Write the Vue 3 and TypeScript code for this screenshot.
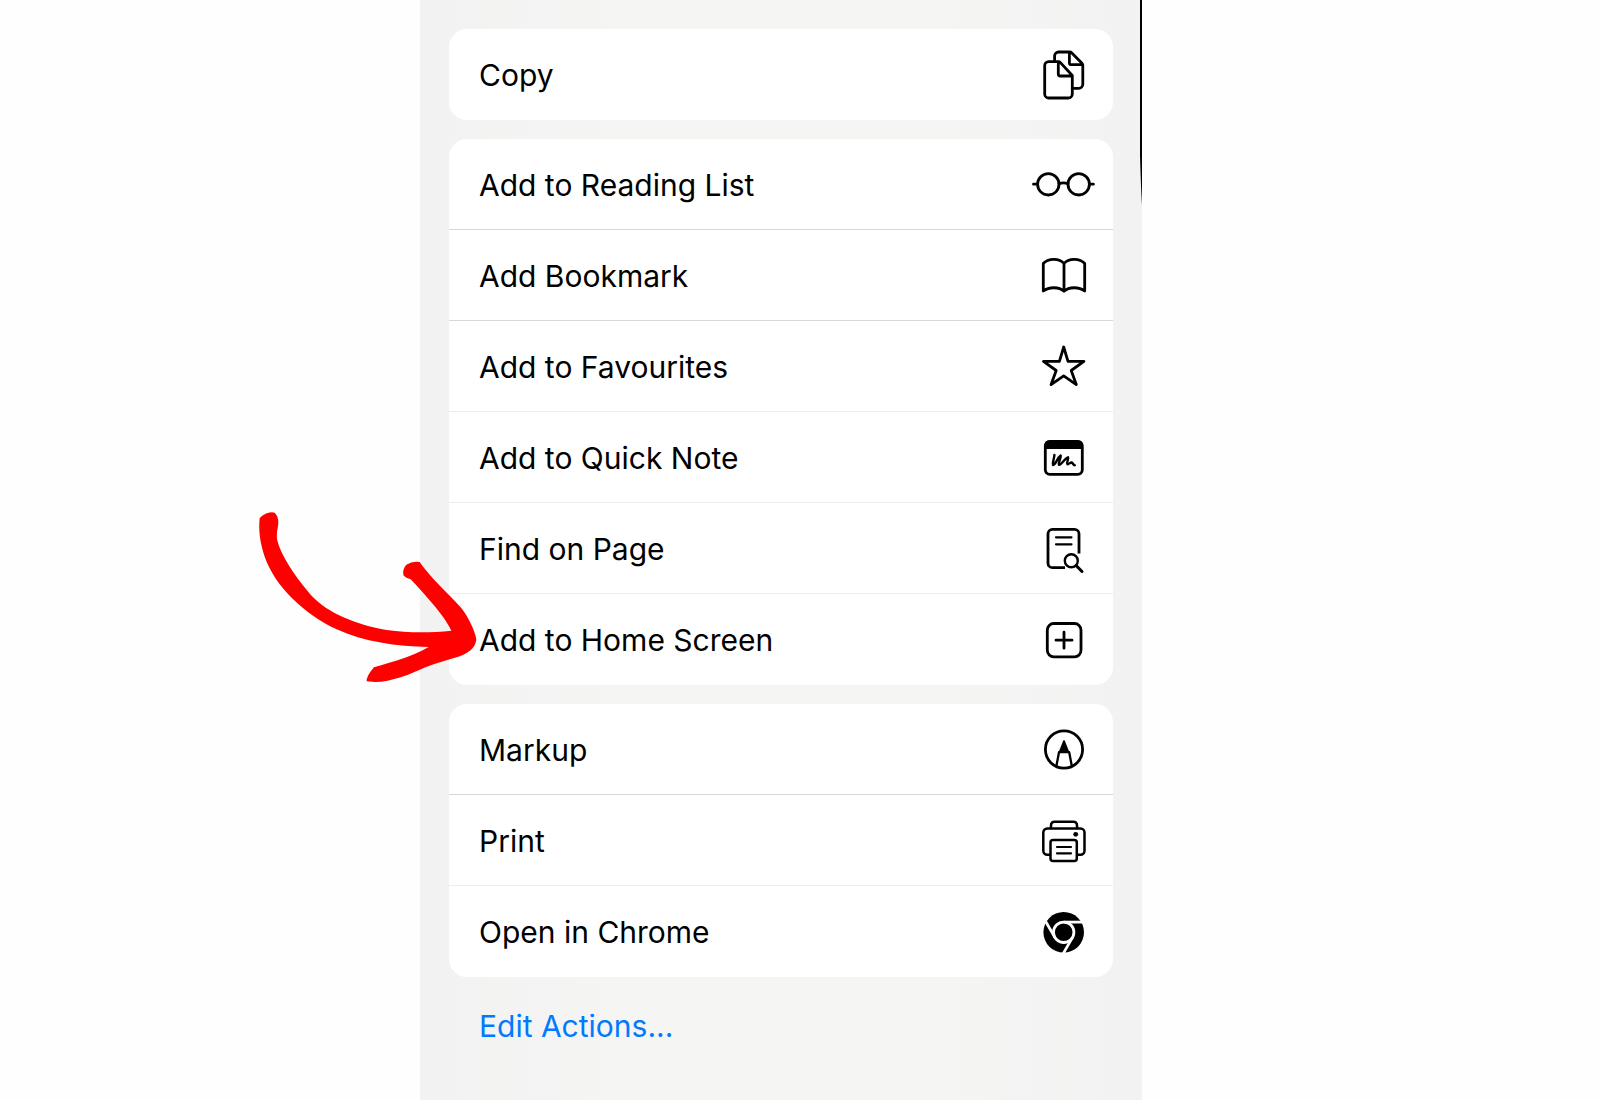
<script setup lang="ts">
type IconName =
  | 'copy'
  | 'glasses'
  | 'book'
  | 'star'
  | 'note'
  | 'find'
  | 'plus'
  | 'markup'
  | 'print'
  | 'chrome'

interface Action {
  label: string
  icon: IconName
  softLine?: boolean
  highlighted?: boolean
}

const groups: Action[][] = [
  [{ label: 'Copy', icon: 'copy' }],
  [
    { label: 'Add to Reading List', icon: 'glasses' },
    { label: 'Add Bookmark', icon: 'book' },
    { label: 'Add to Favourites', icon: 'star', softLine: true },
    { label: 'Add to Quick Note', icon: 'note', softLine: true },
    { label: 'Find on Page', icon: 'find', softLine: true },
    { label: 'Add to Home Screen', icon: 'plus', highlighted: true },
  ],
  [
    { label: 'Markup', icon: 'markup' },
    { label: 'Print', icon: 'print', softLine: true },
    { label: 'Open in Chrome', icon: 'chrome' },
  ],
]
</script>

<template>
  <div class="page">
    <main class="sheet">
      <ul v-for="(group, index) in groups" :key="index" class="card">
        <li
          v-for="action in group"
          :key="action.label"
          class="item"
          :class="{ soft: action.softLine }"
        >
          <button type="button" class="action">
            <span class="label">{{ action.label }}</span>
            <svg class="icon" viewBox="0 0 64 90" aria-hidden="true">
              <g v-if="action.icon === 'copy'">
                <path d="M27 32.6H16.7a4 4 0 0 0-4 4V65a4 4 0 0 0 4 4h19.6a4 4 0 0 0 4-4V46.5L28.2 33.4Q27.5 32.6 26.3 32.6V45a2 2 0 0 0 2 2h12" />
                <path d="M22.6 31.5V27a4 4 0 0 1 4-4H37.4Q38.8 23 39.6 23.8L50.2 34.6Q50.8 35.3 50.8 36.4V55.3a4 4 0 0 1-4 4H42M37.4 23.4V33.7a2 2 0 0 0 2 2H50.6" />
              </g>
              <g v-else-if="action.icon === 'glasses'">
                <circle cx="16.3" cy="45.3" r="10.7" />
                <circle cx="46.7" cy="45.3" r="10.7" />
                <path d="M27 44.6q4.500-1.600 9 0M1.500 45.200h4M57.700 45.200h3.700" />
              </g>
              <g v-else-if="action.icon === 'book'">
                <path d="M11.300 61V33.500C16 28 27.500 27.800 32 33.500C36.500 27.800 48 28 52.700 33.500V61C47 56.600 37 56.600 32 61.300C27 56.600 17 56.600 11.300 61ZM32 33.500V61" />
              </g>
              <g v-else-if="action.icon === 'star'">
                <path d="M31.700 26L36 40.300H51.900L39.200 49.500L44.300 63.600L31.700 54.900L19.100 63.600L24.200 49.500L11.500 40.300H27.400Z" />
              </g>
              <g v-else-if="action.icon === 'note'">
                <rect x="13.300" y="29.300" width="37" height="33" rx="4.500" />
                <path class="solid" d="M12.500 37V33a4.500 4.500 0 0 1 4.500-4.500H46.500A4.500 4.500 0 0 1 51 33V37Z" />
                <path d="M22.400 43C22.400 46 20.200 50.500 21 53C24 52.500 25 46 28.700 43.600C29.500 46 25.800 50.800 27 52.800C30 52.600 32 47 36 45.300C37 47.500 34 50.500 35.400 52.200C37 52.500 38 50.300 39.600 50.500C41 50.800 41 53 42.800 53.200" stroke-width="2.400" />
              </g>
              <g v-else-if="action.icon === 'find'">
                <path d="M33 64.700H20.500a4.500 4.500 0 0 1-4.500-4.500V30.800a4.500 4.500 0 0 1 4.500-4.500H42.500a4.500 4.500 0 0 1 4.500 4.500V50.500" stroke-linecap="butt" />
                <path d="M24 34.300H39.500M24 41.300H39.500" stroke-width="2.200" />
                <circle cx="39.300" cy="57.700" r="6.500" stroke-width="2.400" />
                <path d="M44.200 62.600L50 68.500" stroke-width="3" />
              </g>
              <g v-else-if="action.icon === 'plus'">
                <rect x="15.300" y="29.500" width="33.700" height="33.300" rx="6.500" />
                <path d="M24 46.200H40M32 38.200V54.200" />
              </g>
              <g v-else-if="action.icon === 'markup'">
                <circle cx="32" cy="45.500" r="18.600" />
                <path class="solid" d="M31 37.200Q32 35 33 37.200L37.500 48.500H26.500Z" />
                <path d="M24.500 61.500L27 48.200H37.200L39.700 61.500" stroke-width="2.300" />
              </g>
              <g v-else-if="action.icon === 'print'">
                <path d="M19 33V30.200a3.500 3.500 0 0 1 3.500-3.500h19a3.500 3.500 0 0 1 3.500 3.500V33" stroke-width="2.500" />
                <path d="M18 59.700H15.300a4 4 0 0 1-4-4V37.500a4 4 0 0 1 4-4H48.500a4 4 0 0 1 4 4V55.700a4 4 0 0 1-4 4H46" stroke-width="2.500" />
                <rect x="18.500" y="44.900" width="26.300" height="21" rx="2.500" stroke-width="2.500" />
                <path d="M25 52H39M25 58.300H39" stroke-width="2.200" />
                <circle class="solid" cx="43.700" cy="39.300" r="2.400" />
              </g>
              <g v-else>
                <circle class="solid" cx="31.700" cy="46.300" r="20.300" />
                <g class="cut">
                  <circle cx="31.700" cy="46.300" r="10.200" />
                  <path d="M31.700 36.100H53" />
                  <path d="M31.700 36.100H53" transform="rotate(120 31.700 46.300)" />
                  <path d="M31.700 36.100H53" transform="rotate(240 31.700 46.300)" />
                </g>
              </g>
            </svg>
          </button>
          <svg v-if="action.highlighted" class="arrow" viewBox="0 0 780 630" aria-hidden="true">
            <path d="M59 85Q64 77 80 70Q96 64 104 68Q115 78 115 98Q114 112 111 125Q110 136 111 148C122 196 162 255 212 314C265 372 350 403 440 420C510 430 575 428 634 422C615 380 565 325 512 268Q500 265 491 257Q486 238 499 224Q518 212 539 216C570 262 625 310 662 352C685 380 706 425 709 449C706 475 682 491 655 500C625 509 590 518 560 530C510 553 455 575 405 576L380 574Q378 560 402 532C460 515 515 500 566 471C470 470 370 455 290 418C195 373 105 290 74 200C60 160 55 120 59 85Z" />
          </svg>
        </li>
      </ul>
      <a class="edit" href="#">Edit Actions...</a>
      <svg class="edge" viewBox="0 0 3 205" aria-hidden="true">
        <path d="M0 0H2V205Q1 190 0 155Z" />
      </svg>
    </main>
  </div>
</template>

<style>
body {
  margin: 0;
  background: #fefefe;
}
</style>

<style scoped>
.page {
  display: grid;
  grid-template-columns: 420fr 722fr 458fr;
  min-height: 100vh;
  font-family: Inter, "Liberation Sans", sans-serif;
  font-size: 30px;
  line-height: 40px;
  color: #000;
}

.sheet {
  grid-column: 2;
  position: relative;
  box-sizing: border-box;
  display: flex;
  flex-direction: column;
  gap: 19px;
  padding: 29px;
  background: linear-gradient(90deg, #f2f2f2, #f5f5f4 30%, #f5f5f4 70%, #f2f2f2);
}

.card {
  margin: 0;
  padding: 0;
  list-style: none;
  background: #fff;
  border-radius: 18px;
}

.item {
  position: relative;
  box-sizing: border-box;
  height: 91px;
  border-bottom: 1px solid #d8d8d8;
}

.item.soft {
  border-bottom-color: #ededed;
}

.item:last-child {
  border-bottom: 0;
}

.action {
  display: flex;
  align-items: center;
  justify-content: space-between;
  width: 100%;
  height: 90px;
  padding: 0 17px 0 30px;
  border: 0;
  background: none;
  color: inherit;
  font: inherit;
  text-align: left;
  cursor: pointer;
}

.label {
  padding-top: 2px;
}

.icon {
  flex: none;
  width: 64px;
  height: 90px;
  fill: none;
  stroke: #000;
  stroke-width: 2.8;
  stroke-linecap: round;
  stroke-linejoin: round;
}

.solid {
  fill: #000;
  stroke: none;
}

.cut {
  stroke: #fff;
  stroke-width: 2.8;
  stroke-linecap: butt;
}

.arrow {
  position: absolute;
  left: -209px;
  top: -104px;
  width: 260px;
  height: 210px;
  fill: #f00;
  pointer-events: none;
}

.edit {
  align-self: flex-start;
  margin: 10px 30px;
  color: #007aff;
  text-decoration: none;
}

.edge {
  position: absolute;
  top: 0;
  right: -1px;
  width: 3px;
  height: 205px;
}
</style>
